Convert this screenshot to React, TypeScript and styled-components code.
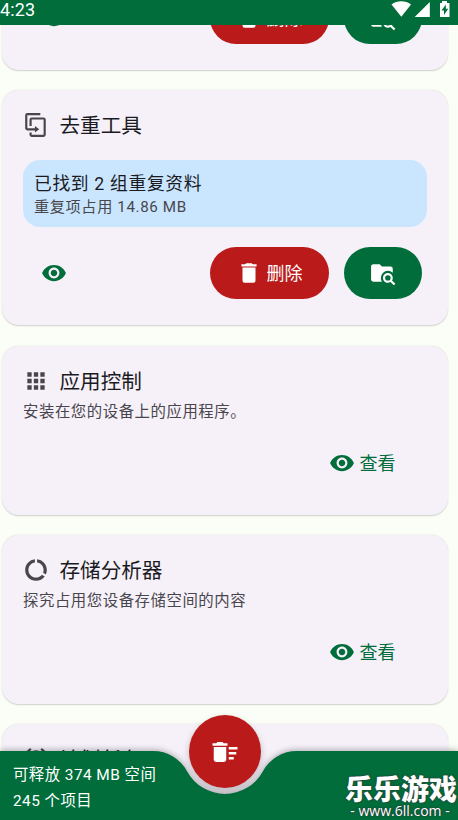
import React from "react";
import styled, { createGlobalStyle } from "styled-components";

const colors = {
  green: "#006d3b",
  red: "#ba1a1a",
  page: "#fbfdf7",
  card: "#f6f1f9",
  info: "#cae6ff",
  text: "#1b1b1f",
  muted: "#48464c",
};

const GlobalStyle = createGlobalStyle`
  * { box-sizing: border-box; }
  body { margin: 0; background: ${colors.page}; }
`;

const Screen = styled.div`
  position: relative;
  width: 458px;
  height: 820px;
  overflow: hidden;
  display: flex;
  flex-direction: column;
  background: ${colors.page};
  color: ${colors.text};
  font-family: Roboto, "Noto Sans CJK SC", sans-serif;
`;

const StatusBar = styled.header`
  flex: none;
  height: 25px;
  display: flex;
  justify-content: space-between;
  background: ${colors.green};
  color: #fff;
  z-index: 1;
`;

const Clock = styled.span`
  font-size: 18px;
  line-height: 20px;
  letter-spacing: 0.1px;
`;

const StatusIcons = styled.div`
  display: flex;
  padding: 0 8px 0 0;
`;

const Viewport = styled.main`
  flex: 1;
  min-height: 0;
  overflow: hidden;
`;

const CardList = styled.div`
  display: flex;
  flex-direction: column;
  gap: 20.3px;
  margin-top: -58px;
  padding: 0 10px 0 2px;
`;

const Card = styled.section<{ $height: number }>`
  flex: none;
  height: ${(p) => p.$height}px;
  display: flex;
  flex-direction: column;
  padding: 22px 21px 26px;
  border-radius: 17px;
  background: ${colors.card};
  box-shadow: 0 0.5px 1.5px rgba(0, 0, 0, 0.18);
`;

const CardHeader = styled.div`
  flex: none;
  display: flex;
  align-items: center;
  gap: 10.5px;
  height: 26px;
  color: ${colors.muted};
`;

const Title = styled.h2`
  margin: 0;
  padding-top: 2px;
  color: ${colors.text};
  font-size: 20.6px;
  line-height: 26px;
  font-weight: 400;
  white-space: nowrap;
`;

const Description = styled.p`
  margin: 8px 0 0;
  color: ${colors.muted};
  font-size: 15.4px;
  line-height: 20px;
  letter-spacing: 0.55px;
  white-space: nowrap;
`;

const InfoBox = styled.div`
  height: 67px;
  margin-top: 22px;
  padding: 12px 11px;
  border-radius: 17px;
  background: ${colors.info};
`;

const InfoTitle = styled.div`
  font-size: 17.8px;
  line-height: 23px;
  letter-spacing: 0.65px;
`;

const InfoDetail = styled.div`
  color: ${colors.muted};
  font-size: 15.2px;
  line-height: 24px;
  letter-spacing: 0.6px;
`;

const Actions = styled.div`
  display: flex;
  align-items: center;
  gap: 15.5px;
  margin-top: auto;
  padding-right: 5px;
`;

const IconButton = styled.button`
  display: flex;
  margin: 0 auto 0 18px;
  padding: 0;
  border: 0;
  background: none;
  color: ${colors.green};
`;

const PillButton = styled.button<{ $danger?: boolean }>`
  display: flex;
  align-items: center;
  justify-content: center;
  gap: 5px;
  width: ${(p) => (p.$danger ? 119 : 78)}px;
  height: 52px;
  padding: 0;
  border: 0;
  border-radius: 26px;
  background: ${(p) => (p.$danger ? colors.red : colors.green)};
  color: #fff;
  font: 400 18px/26px Roboto, "Noto Sans CJK SC", sans-serif;
`;

const PillLabel = styled.span`
  padding-top: 2px;
`;

const ViewButton = styled.button`
  display: flex;
  align-items: flex-start;
  gap: 5px;
  margin: auto 31.5px 12px auto;
  padding: 0;
  border: 0;
  background: none;
  color: ${colors.green};
  font: 400 18px/26px Roboto, "Noto Sans CJK SC", sans-serif;

  svg {
    margin-top: -1px;
  }
`;

const BottomBar = styled.footer`
  position: absolute;
  left: 0;
  bottom: 0;
  width: 458px;
  height: 69px;
  display: flex;
  justify-content: space-between;
  color: #fff;
`;

const BarShape = styled.svg`
  position: absolute;
  inset: 0;
  overflow: visible;
  filter: drop-shadow(0 -1px 3px rgba(0, 0, 0, 0.3));
`;

const Summary = styled.div`
  position: relative;
  padding: 11.4px 0 0 13px;
  font-size: 15.4px;
  line-height: 26px;
  letter-spacing: 0.45px;
  white-space: nowrap;
`;

const CleanButton = styled.button`
  position: absolute;
  left: 189px;
  top: -36px;
  display: flex;
  align-items: center;
  justify-content: center;
  width: 72px;
  height: 73px;
  padding: 0;
  border: 0;
  border-radius: 50%;
  background: ${colors.red};
  color: #fff;
  box-shadow: 0 3px 7px rgba(0, 0, 0, 0.22);
`;

const Brand = styled.div`
  position: relative;
  width: 114px;
  padding-top: 20px;
  display: flex;
  flex-direction: column;
  align-items: center;
  white-space: nowrap;
`;

const BrandName = styled.div`
  font: 900 28px/34px "Noto Sans CJK SC", sans-serif;
  text-shadow: 0 0 2px #333, 0 0 1px #333;
`;

const BrandUrl = styled.div`
  margin: -3px 0 0 -2px;
  font: 400 14px/18px "Open Sans", sans-serif;
  text-shadow: 0 0 2px #333, 0 0 1px #333;
`;

const paths = {
  eye: "M12 4.5C7 4.5 2.73 7.61 1 12c1.73 4.39 6 7.5 11 7.5s9.27-3.11 11-7.5c-1.73-4.39-6-7.5-11-7.5zM12 17c-2.76 0-5-2.24-5-5s2.24-5 5-5 5 2.24 5 5-2.24 5-5 5zm0-8c-1.66 0-3 1.34-3 3s1.34 3 3 3 3-1.34 3-3-1.34-3-3-3z",
  trash: "M19 4h-3.5l-1-1h-5l-1 1H5v2h14M6 19a2 2 0 0 0 2 2h8a2 2 0 0 0 2-2V7H6v12z",
  folderSearch:
    "M16.5 12C19 12 21 14 21 16.5c0 .88-.25 1.71-.69 2.4L23.39 22 22 23.39l-3.12-3.07c-.69.43-1.51.68-2.38.68C14 21 12 19 12 16.5S14 12 16.5 12m0 2a2.5 2.5 0 0 0 0 5 2.5 2.5 0 0 0 0-5M9 4l2 2h8a2 2 0 0 1 2 2v3.81A6.48 6.48 0 0 0 16.5 10a6.5 6.5 0 0 0-6.5 6.5c0 1.29.37 2.5 1 3.5H3a2 2 0 0 1-2-2V6c0-1.11.89-2 2-2h6z",
  duplicate:
    "M11 17H4a2 2 0 0 1-2-2V3a2 2 0 0 1 2-2h12v2H4v12h7v-2l4 3-4 3v-2m8 4V7H8v6H6V7a2 2 0 0 1 2-2h11a2 2 0 0 1 2 2v14a2 2 0 0 1-2 2H8a2 2 0 0 1-2-2v-2h2v2h11z",
  apps: "M4 8h4V4H4v4zm6 12h4v-4h-4v4zm-6 0h4v-4H4v4zm0-6h4v-4H4v4zm6 0h4v-4h-4v4zm6-10v4h4V4h-4zm-6 4h4V4h-4v4zm6 6h4v-4h-4v4zm0 6h4v-4h-4v4z",
  dataUsage:
    "M13 2.05v3.03c3.39.49 6 3.39 6 6.92 0 .9-.18 1.75-.48 2.54l2.6 1.53c.56-1.24.88-2.62.88-4.07 0-5.18-3.95-9.45-9-9.95zM12 19c-3.87 0-7-3.13-7-7 0-3.53 2.61-6.43 6-6.92V2.05c-5.06.5-9 4.76-9 9.95 0 5.52 4.47 10 9.99 10 3.31 0 6.24-1.61 8.06-4.09l-2.6-1.53C16.17 17.98 14.21 19 12 19z",
  alarm:
    "M10.54 14.53L8.41 12.4l-1.06 1.06 3.18 3.18 6-6-1.06-1.06-4.93 4.95M12 20a7 7 0 1 1 0-14 7 7 0 0 1 0 14m0-16a9 9 0 1 0 0 18 9 9 0 0 0 0-18m-4.12-.61L6.6 1.86 2 5.71l1.29 1.53 4.59-3.85M22 5.72l-4.6-3.86-1.29 1.53 4.6 3.86L22 5.72z",
  sweep:
    "M15 16h4v2h-4zm0-8h7v2h-7zm0 4h6v2h-6zM3 18c0 1.1.9 2 2 2h6c1.1 0 2-.9 2-2V8H3v10zM14 5h-3l-1-1H6L5 5H2v2h12z",
};

function Icon({ name, size = 26 }: { name: keyof typeof paths; size?: number }) {
  return (
    <svg width={size} height={size} viewBox="0 0 24 24" fill="currentColor" fillRule="evenodd">
      <path d={paths[name]} />
    </svg>
  );
}

function CardTitle({ icon, children }: { icon: keyof typeof paths; children: React.ReactNode }) {
  return (
    <CardHeader>
      <Icon name={icon} />
      <Title>{children}</Title>
    </CardHeader>
  );
}

function CleanupActions() {
  return (
    <Actions>
      <IconButton aria-label="查看">
        <Icon name="eye" />
      </IconButton>
      <PillButton $danger>
        <Icon name="trash" />
        <PillLabel>删除</PillLabel>
      </PillButton>
      <PillButton aria-label="搜索">
        <Icon name="folderSearch" />
      </PillButton>
    </Actions>
  );
}

function ToolCard({
  icon,
  title,
  description,
  height,
}: {
  icon: keyof typeof paths;
  title: string;
  description: string;
  height: number;
}) {
  return (
    <Card $height={height}>
      <CardTitle icon={icon}>{title}</CardTitle>
      <Description>{description}</Description>
      <ViewButton>
        <Icon name="eye" />
        查看
      </ViewButton>
    </Card>
  );
}

export default function App() {
  return (
    <Screen>
      <GlobalStyle />
      <StatusBar>
        <Clock>4:23</Clock>
        <StatusIcons>
          <svg width="60" height="20" viewBox="390 0 60 20" fill="#fff">
            <path d="M391.5 4.5C397 .2 405.5 .2 411 4.5L401.3 16.8z" />
            <path d="M414.7 17L429.8 2V17z" />
            <path
              fillRule="evenodd"
              d="M442 1h5v2h2.5v14h-9.5V3h2zM445.8 4.5l-4.3 6h2.5v4.5l4.2-6.2h-2.4z"
            />
          </svg>
        </StatusIcons>
      </StatusBar>

      <Viewport>
        <CardList>
          <Card $height={103}>
            <CleanupActions />
          </Card>
          <Card $height={235}>
            <CardTitle icon="duplicate">去重工具</CardTitle>
            <InfoBox>
              <InfoTitle>已找到 2 组重复资料</InfoTitle>
              <InfoDetail>重复项占用 14.86 MB</InfoDetail>
            </InfoBox>
            <CleanupActions />
          </Card>
          <ToolCard height={169} icon="apps" title="应用控制" description="安装在您的设备上的应用程序。" />
          <ToolCard height={169} icon="dataUsage" title="存储分析器" description="探究占用您设备存储空间的内容" />
          <Card $height={169}>
            <CardTitle icon="alarm">计划任务</CardTitle>
          </Card>
        </CardList>
      </Viewport>

      <BottomBar>
        <BarShape width="458" height="69" viewBox="0 0 458 69">
          <path
            fill={colors.green}
            d="M0 0H153A38.8 38.8 0 0 1 187.2 20.4A43 43 0 0 0 262.8 20.4A38.8 38.8 0 0 1 297 0H458V69H0z"
          />
        </BarShape>
        <Summary>
          可释放 374 MB 空间
          <br />
          245 个项目
        </Summary>
        <CleanButton aria-label="清理">
          <Icon name="sweep" size={30} />
        </CleanButton>
        <Brand>
          <BrandName>乐乐游戏</BrandName>
          <BrandUrl>- www.6ll.com -</BrandUrl>
        </Brand>
      </BottomBar>
    </Screen>
  );
}
